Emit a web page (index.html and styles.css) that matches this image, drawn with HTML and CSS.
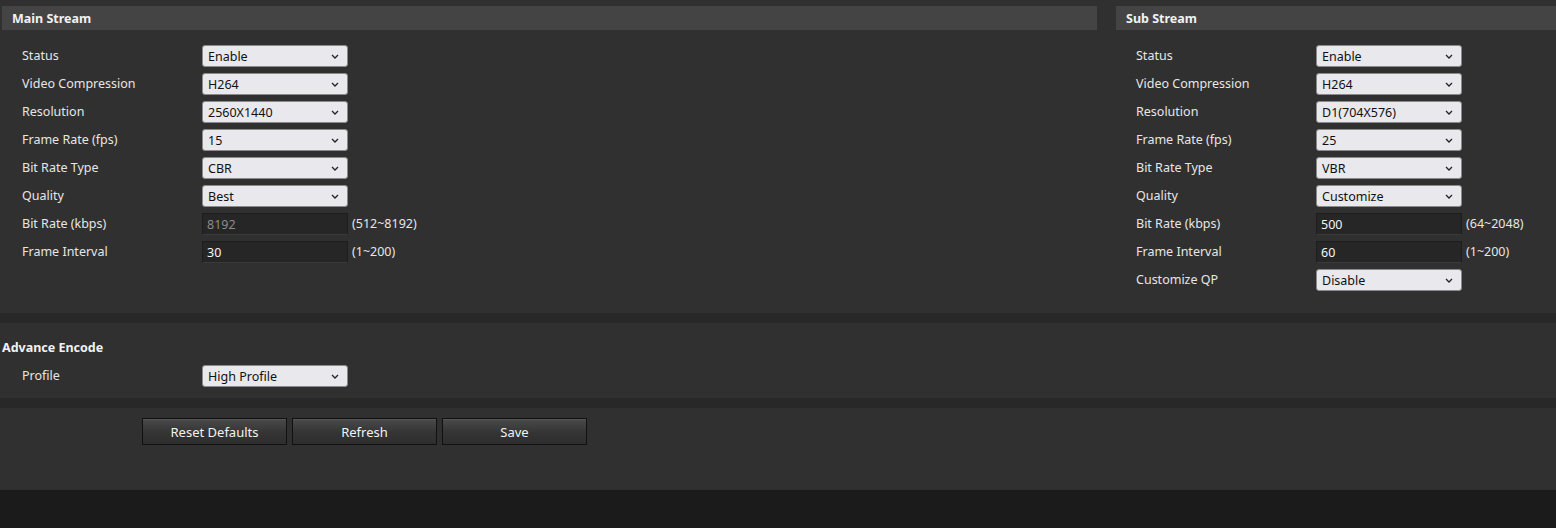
FILE: index.html
```html
<!DOCTYPE html>
<html>
<head>
<meta charset="utf-8">
<link rel="stylesheet" href="styles.css">
</head>
<body>
<div class="page">
  <div class="streams">
    <section class="col col-main">
      <div class="head">Main Stream</div>
      <div class="rows">
        <div class="row"><span class="lbl">Status</span><div class="sel"><span>Enable</span><svg class="chev" width="8" height="5" viewBox="0 0 8 5"><path d="M1 1 L4 4 L7 1" fill="none" stroke="#222" stroke-width="1.3"/></svg></div></div>
        <div class="row"><span class="lbl">Video Compression</span><div class="sel"><span>H264</span><svg class="chev" width="8" height="5" viewBox="0 0 8 5"><path d="M1 1 L4 4 L7 1" fill="none" stroke="#222" stroke-width="1.3"/></svg></div></div>
        <div class="row"><span class="lbl">Resolution</span><div class="sel"><span>2560X1440</span><svg class="chev" width="8" height="5" viewBox="0 0 8 5"><path d="M1 1 L4 4 L7 1" fill="none" stroke="#222" stroke-width="1.3"/></svg></div></div>
        <div class="row"><span class="lbl">Frame Rate (fps)</span><div class="sel"><span>15</span><svg class="chev" width="8" height="5" viewBox="0 0 8 5"><path d="M1 1 L4 4 L7 1" fill="none" stroke="#222" stroke-width="1.3"/></svg></div></div>
        <div class="row"><span class="lbl">Bit Rate Type</span><div class="sel"><span>CBR</span><svg class="chev" width="8" height="5" viewBox="0 0 8 5"><path d="M1 1 L4 4 L7 1" fill="none" stroke="#222" stroke-width="1.3"/></svg></div></div>
        <div class="row"><span class="lbl">Quality</span><div class="sel"><span>Best</span><svg class="chev" width="8" height="5" viewBox="0 0 8 5"><path d="M1 1 L4 4 L7 1" fill="none" stroke="#222" stroke-width="1.3"/></svg></div></div>
        <div class="row"><span class="lbl">Bit Rate (kbps)</span><div class="inp disabled">8192</div><span class="range">(512~8192)</span></div>
        <div class="row"><span class="lbl">Frame Interval</span><div class="inp">30</div><span class="range">(1~200)</span></div>
      </div>
    </section>
    <section class="col col-sub">
      <div class="head">Sub Stream</div>
      <div class="rows">
        <div class="row"><span class="lbl">Status</span><div class="sel"><span>Enable</span><svg class="chev" width="8" height="5" viewBox="0 0 8 5"><path d="M1 1 L4 4 L7 1" fill="none" stroke="#222" stroke-width="1.3"/></svg></div></div>
        <div class="row"><span class="lbl">Video Compression</span><div class="sel"><span>H264</span><svg class="chev" width="8" height="5" viewBox="0 0 8 5"><path d="M1 1 L4 4 L7 1" fill="none" stroke="#222" stroke-width="1.3"/></svg></div></div>
        <div class="row"><span class="lbl">Resolution</span><div class="sel"><span>D1(704X576)</span><svg class="chev" width="8" height="5" viewBox="0 0 8 5"><path d="M1 1 L4 4 L7 1" fill="none" stroke="#222" stroke-width="1.3"/></svg></div></div>
        <div class="row"><span class="lbl">Frame Rate (fps)</span><div class="sel"><span>25</span><svg class="chev" width="8" height="5" viewBox="0 0 8 5"><path d="M1 1 L4 4 L7 1" fill="none" stroke="#222" stroke-width="1.3"/></svg></div></div>
        <div class="row"><span class="lbl">Bit Rate Type</span><div class="sel"><span>VBR</span><svg class="chev" width="8" height="5" viewBox="0 0 8 5"><path d="M1 1 L4 4 L7 1" fill="none" stroke="#222" stroke-width="1.3"/></svg></div></div>
        <div class="row"><span class="lbl">Quality</span><div class="sel"><span>Customize</span><svg class="chev" width="8" height="5" viewBox="0 0 8 5"><path d="M1 1 L4 4 L7 1" fill="none" stroke="#222" stroke-width="1.3"/></svg></div></div>
        <div class="row"><span class="lbl">Bit Rate (kbps)</span><div class="inp">500</div><span class="range">(64~2048)</span></div>
        <div class="row"><span class="lbl">Frame Interval</span><div class="inp">60</div><span class="range">(1~200)</span></div>
        <div class="row"><span class="lbl">Customize QP</span><div class="sel"><span>Disable</span><svg class="chev" width="8" height="5" viewBox="0 0 8 5"><path d="M1 1 L4 4 L7 1" fill="none" stroke="#222" stroke-width="1.3"/></svg></div></div>
      </div>
    </section>
  </div>
  <div class="divider"></div>
  <section class="advance">
    <div class="adv-head">Advance Encode</div>
    <div class="row"><span class="lbl">Profile</span><div class="sel"><span>High Profile</span><svg class="chev" width="8" height="5" viewBox="0 0 8 5"><path d="M1 1 L4 4 L7 1" fill="none" stroke="#222" stroke-width="1.3"/></svg></div></div>
  </section>
  <div class="divider"></div>
  <section class="actions">
    <button class="btn">Reset Defaults</button>
    <button class="btn">Refresh</button>
    <button class="btn">Save</button>
  </section>
  <div class="footer"></div>
</div>
</body>
</html>
```

FILE: styles.css
```css
* { box-sizing: border-box; }
html, body {
  margin: 0;
  padding: 0;
  background: #1b1b1b;
}
body {
  font-family: "Noto Sans", "Open Sans", sans-serif;
  font-size: 13px;
  color: #e6e6e6;
  width: 1556px;
  height: 528px;
  overflow: hidden;
}
.page {
  display: flex;
  flex-direction: column;
}
.streams {
  display: grid;
  grid-template-columns: 1095px 440px;
  column-gap: 19px;
  padding: 6px 0 0 2px;
  background: #303030;
  height: 313px;
}
.head {
  height: 24px;
  line-height: 24px;
  background: #444444;
  padding: 1px 0 0 10px;
  font-weight: 700;
  font-size: 12.5px;
  color: #f2f2f2;
}
.rows {
  padding: 12px 0 0 20px;
  display: flex;
  flex-direction: column;
}
.row {
  height: 28px;
  display: flex;
  align-items: center;
}
.lbl {
  width: 180px;
  flex: none;
  font-size: 12.5px;
  color: #e6e6e6;
  margin-top: -1px;
}
.sel {
  width: 146px;
  height: 22px;
  border: 1px solid #8a8a8a;
  border-radius: 3px;
  background: #e9e8ec;
  color: #111;
  display: flex;
  align-items: center;
  justify-content: space-between;
  padding: 0 8px 0 5px;
  font-size: 12.5px;
}
.chev { flex: none; }
.inp {
  width: 146px;
  height: 22px;
  background: #262626;
  border: 1px solid #1d1d1d;
  border-bottom-color: #3a3a3a;
  color: #f5f5f5;
  padding: 2px 0 0 4px;
  font-size: 12.5px;
  line-height: 18px;
}
.inp.disabled { color: #8c8c8c; }
.range {
  margin-left: 4px;
  font-size: 12.5px;
  color: #e6e6e6;
  margin-top: -1px;
}
.divider {
  height: 10px;
  background: #282828;
}
.advance {
  background: #303030;
  height: 75px;
  padding-top: 13px;
}
.adv-head {
  padding-left: 2px;
  font-weight: 700;
  font-size: 12.5px;
  color: #f2f2f2;
  line-height: 24px;
  height: 26px;
}
.advance .row { padding-left: 22px; }
.actions {
  background: #303030;
  height: 82px;
  padding: 10px 0 0 142px;
  display: flex;
  align-items: flex-start;
  gap: 5px;
}
.btn {
  width: 145px;
  height: 27px;
  border: 1px solid #111;
  background: linear-gradient(#4a4a4a, #343434 55%, #2e2e2e);
  color: #f2f2f2;
  font-family: "Noto Sans", "Open Sans", sans-serif;
  font-size: 13px;
  padding: 0;
  box-shadow: inset 0 1px 0 #555;
}
.footer {
  height: 38px;
  background: #1b1b1b;
}
```
